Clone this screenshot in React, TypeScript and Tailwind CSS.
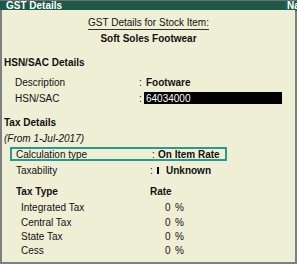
import React from "react";

const Row = ({ className = "", children }: { className?: string; children: React.ReactNode }) => (
  <div className={`flex items-center h-[14px] ${className}`}>{children}</div>
);

export default function App() {
  return (
    <div
      className="w-[297px] h-[264px] flex flex-col bg-[#808080] text-[10px] text-[#111] overflow-hidden"
      style={{ fontFamily: '"Liberation Sans", Arial, sans-serif' }}
    >
      <div className="h-[1px] bg-[#6f6f6f]" />
      <div className="h-[9px] flex items-center bg-[#1b5a48] text-white font-bold leading-none">
        <span className="pl-[6px] flex-1">GST Details</span>
        <span className="w-[12px] pl-[2px] bg-[#1d6350] overflow-hidden whitespace-nowrap">Na</span>
      </div>
      <div className="flex-1 flex flex-col mx-[2px] mb-[2px] bg-[#efefd6]">
        <Row className="mt-[6px] justify-center">
          <span className="border-b border-[#333] leading-[12px]">GST Details for Stock Item:</span>
        </Row>
        <Row className="mt-[1px] justify-center font-bold">Soft Soles Footwear</Row>
        <Row className="mt-[10px] pl-[2px] font-bold">HSN/SAC Details</Row>
        <Row className="mt-[6px]">
          <span className="pl-[13px] w-[137px]">Description</span>
          <span className="w-[7px]">:</span>
          <span className="font-bold">Footware</span>
        </Row>
        <Row className="mt-[2px]">
          <span className="pl-[13px] w-[137px]">HSN/SAC</span>
          <span className="w-[5px]">:</span>
          <span className="w-[138px] h-[12px] bg-black text-white flex items-center pl-[2px]">64034000</span>
        </Row>
        <Row className="mt-[10px] pl-[2px] font-bold">Tax Details</Row>
        <Row className="mt-[2px] pl-[2px] italic">(From 1-Jul-2017)</Row>
        <div className="mt-[2px] ml-[8px] w-[217px] h-[14px] border-2 border-[#2a9a90] flex items-center">
          <span className="pl-[4px] w-[140px]">Calculation type</span>
          <span className="w-[6px]">:</span>
          <span className="font-bold">On Item Rate</span>
        </div>
        <Row className="mt-[2px]">
          <span className="pl-[14px] w-[148px]">Taxability</span>
          <span className="w-[7px]">:</span>
          <span className="w-[2px] h-[7px] bg-black mr-[7px]" />
          <span className="font-bold">Unknown</span>
        </Row>
        <Row className="mt-[7px] font-bold">
          <span className="pl-[14px] w-[148px]">Tax Type</span>
          <span>Rate</span>
        </Row>
        {[
          ["Integrated Tax", "mt-[2px]"],
          ["Central Tax", "mt-[1px]"],
          ["State Tax", "mt-0"],
          ["Cess", "mt-0"],
        ].map(([label, mt]) => (
          <Row key={label} className={mt}>
            <span className="pl-[19px] w-[163px]">{label}</span>
            <span className="w-[10px]">0</span>
            <span>%</span>
          </Row>
        ))}
      </div>
    </div>
  );
}
